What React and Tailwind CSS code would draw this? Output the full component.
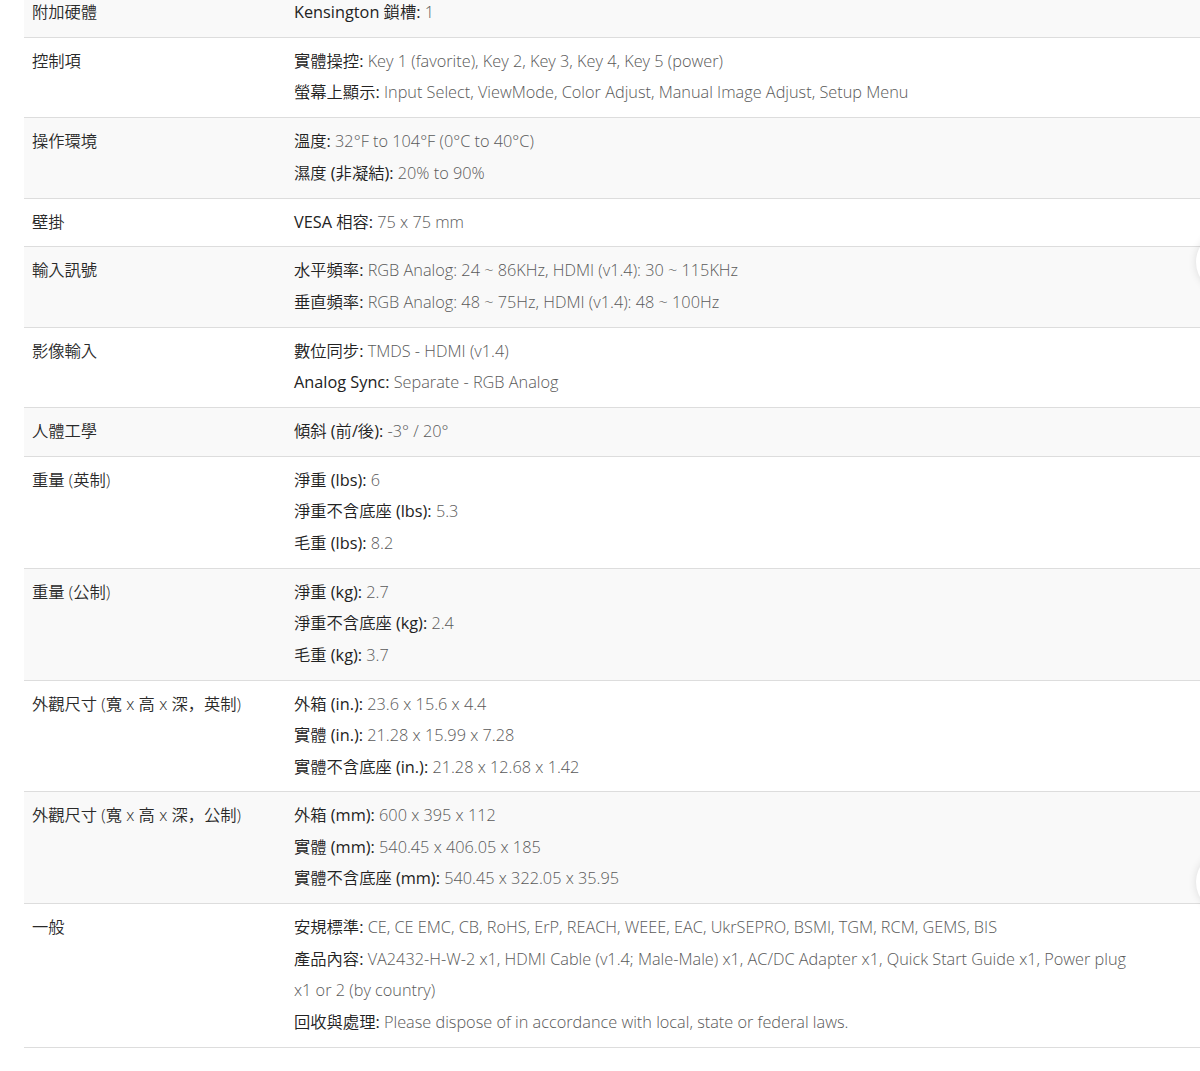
import React from "react";

const rows = [
  { label: "附加硬體", items: [["Kensington 鎖槽:", "1"]] },
  {
    label: "控制項",
    items: [
      ["實體操控:", "Key 1 (favorite), Key 2, Key 3, Key 4, Key 5 (power)"],
      ["螢幕上顯示:", "Input Select, ViewMode, Color Adjust, Manual Image Adjust, Setup Menu"],
    ],
  },
  {
    label: "操作環境",
    items: [
      ["溫度:", "32°F to 104°F (0°C to 40°C)"],
      ["濕度 (非凝結):", "20% to 90%"],
    ],
  },
  { label: "壁掛", items: [["VESA 相容:", "75 x 75 mm"]] },
  {
    label: "輸入訊號",
    items: [
      ["水平頻率:", "RGB Analog: 24 ~ 86KHz, HDMI (v1.4): 30 ~ 115KHz"],
      ["垂直頻率:", "RGB Analog: 48 ~ 75Hz, HDMI (v1.4): 48 ~ 100Hz"],
    ],
  },
  {
    label: "影像輸入",
    items: [
      ["數位同步:", "TMDS - HDMI (v1.4)"],
      ["Analog Sync:", "Separate - RGB Analog"],
    ],
  },
  { label: "人體工學", items: [["傾斜 (前/後):", "-3° / 20°"]] },
  {
    label: "重量 (英制)",
    items: [
      ["淨重 (lbs):", "6"],
      ["淨重不含底座 (lbs):", "5.3"],
      ["毛重 (lbs):", "8.2"],
    ],
  },
  {
    label: "重量 (公制)",
    items: [
      ["淨重 (kg):", "2.7"],
      ["淨重不含底座 (kg):", "2.4"],
      ["毛重 (kg):", "3.7"],
    ],
  },
  {
    label: "外觀尺寸 (寬 x 高 x 深，英制)",
    items: [
      ["外箱 (in.):", "23.6 x 15.6 x 4.4"],
      ["實體 (in.):", "21.28 x 15.99 x 7.28"],
      ["實體不含底座 (in.):", "21.28 x 12.68 x 1.42"],
    ],
  },
  {
    label: "外觀尺寸 (寬 x 高 x 深，公制)",
    items: [
      ["外箱 (mm):", "600 x 395 x 112"],
      ["實體 (mm):", "540.45 x 406.05 x 185"],
      ["實體不含底座 (mm):", "540.45 x 322.05 x 35.95"],
    ],
  },
  {
    label: "一般",
    items: [
      ["安規標準:", "CE, CE EMC, CB, RoHS, ErP, REACH, WEEE, EAC, UkrSEPRO, BSMI, TGM, RCM, GEMS, BIS"],
      ["產品內容:", "VA2432-H-W-2 x1, HDMI Cable (v1.4; Male-Male) x1, AC/DC Adapter x1, Quick Start Guide x1, Power plug x1 or 2 (by country)"],
      ["回收與處理:", "Please dispose of in accordance with local, state or federal laws."],
    ],
  },
];

export default function App() {
  return (
    <div
      className="relative w-[1200px] h-[1071px] overflow-hidden bg-white text-[16.3px] leading-[31.5px]"
      style={{ fontFamily: '"Open Sans", "Noto Sans CJK JP", sans-serif' }}
    >
      <div className="-mt-[11px] ml-6 flex flex-col">
        {rows.map((r, i) => (
          <div
            key={i}
            className={`flex border-b border-[#dddddd] ${i % 2 === 0 ? "bg-[#f9f9f9]" : "bg-white"}`}
          >
            <div className="w-[262px] shrink-0 px-2 pt-[8px] pb-[8.35px] font-[350] text-[#2a2a2a]">
              {r.label}
            </div>
            <div className="w-[860px] shrink-0 px-2 pt-[8px] pb-[8.35px] font-light text-[#595959]">
              {r.items.map(([k, v], j) => (
                <div key={j}>
                  <span
                    className="font-normal text-[#222222]"
                    style={{ fontFamily: '"Open Sans", "Noto Sans CJK JP DemiLight", "Noto Sans CJK JP", sans-serif' }}
                  >
                    {k}
                  </span>{" "}
                  {v}
                </div>
              ))}
            </div>
          </div>
        ))}
      </div>
      <div className="absolute left-[1196px] top-[232px] w-[60px] h-[60px] rounded-full bg-white shadow-[0_0_8px_rgba(0,0,0,0.12)]" />
      <div className="absolute left-[1196px] top-[852px] w-[60px] h-[60px] rounded-full bg-white shadow-[0_0_8px_rgba(0,0,0,0.12)]" />
    </div>
  );
}
